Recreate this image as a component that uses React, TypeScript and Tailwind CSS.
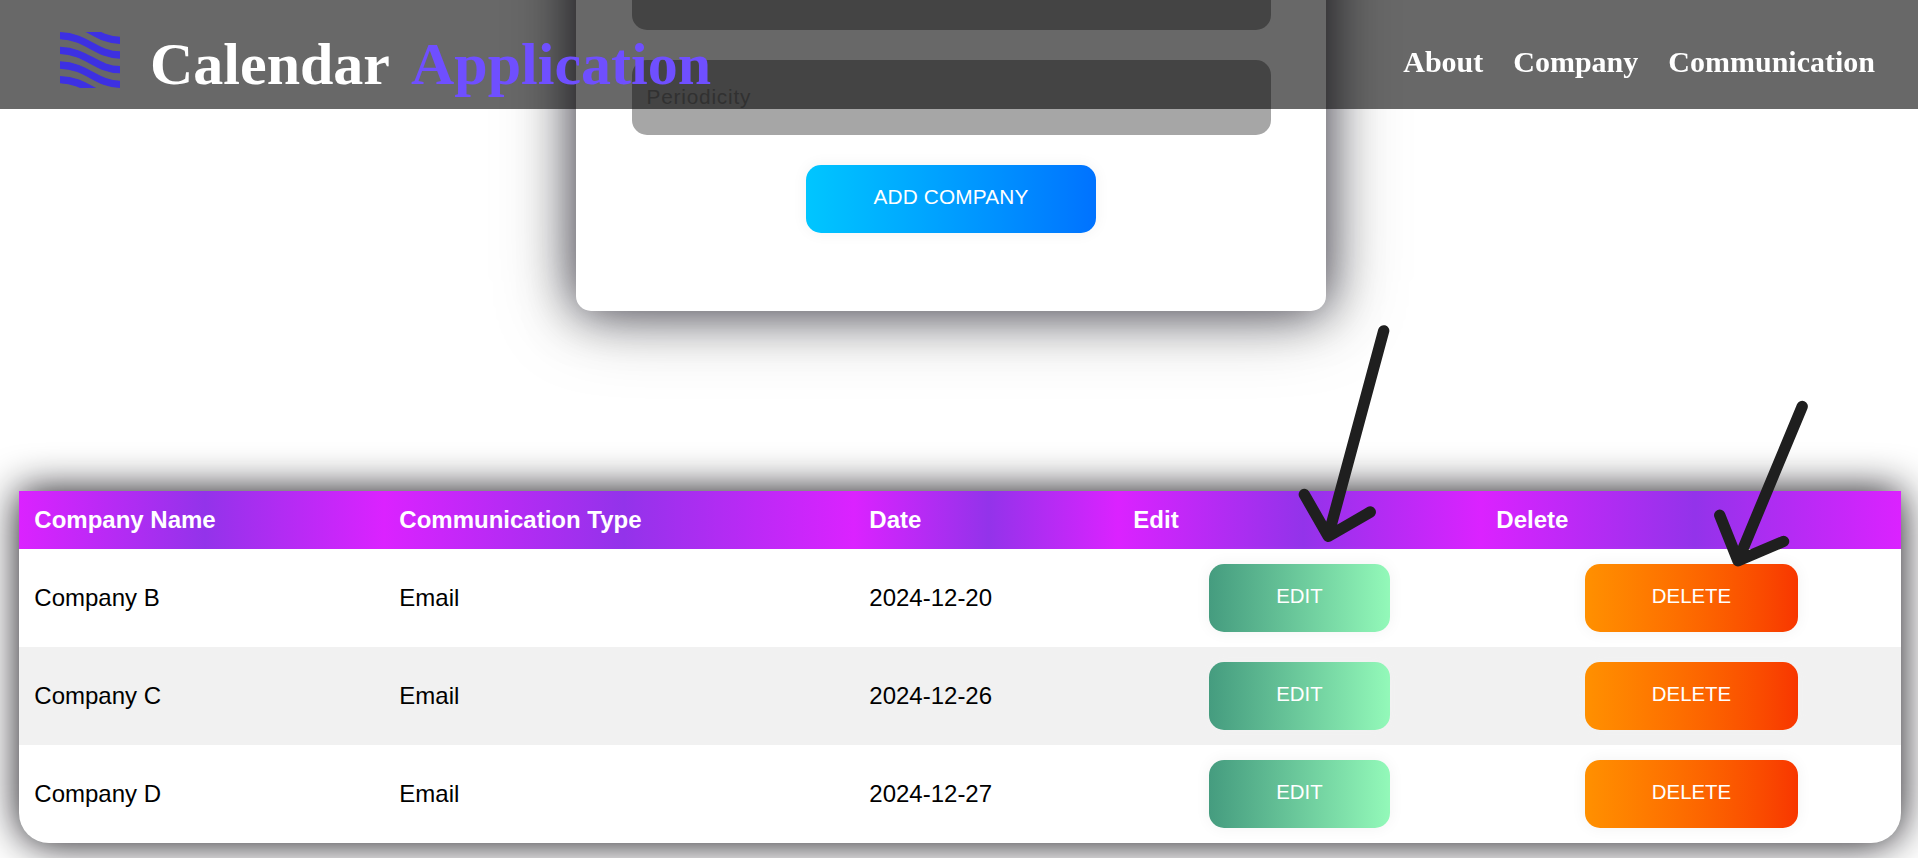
import React from "react";

type Row = { company: string; type: string; date: string };

const rows: Row[] = [
  { company: "Company B", type: "Email", date: "2024-12-20" },
  { company: "Company C", type: "Email", date: "2024-12-26" },
  { company: "Company D", type: "Email", date: "2024-12-27" },
];

const headings = ["Company Name", "Communication Type", "Date", "Edit", "Delete"];
const links = ["About", "Company", "Communication"];

const buttonBase =
  "flex h-[68px] items-center justify-center rounded-[15px] pb-[4px] leading-[24px] uppercase text-white shadow-[0_0_16px_#f2f2f2]";

function Logo() {
  return (
    <svg width="60" height="56" viewBox="0 0 60 56" fill="none" stroke="#3d30e2" strokeWidth="7.3">
      {[-14.7, 0, 14.7, 29.3, 43.9].map((y) => (
        <path key={y} transform={`translate(0 ${y})`} d="M-4 3.7 H0 C27 4.5 36 22.8 60 23 H64" />
      ))}
    </svg>
  );
}

function Header() {
  return (
    <header className="fixed inset-x-0 top-0 z-10 flex h-[109px] items-start justify-between bg-[rgba(3,3,3,0.6)] pr-[43px] pl-[60px] font-['Liberation_Serif',serif] font-bold text-white">
      <div className="flex items-start pt-8">
        <Logo />
        <h1 className="ml-[30px] flex gap-[21px] text-[60px] leading-[64px]">
          <span>Calendar</span>
          <span className="text-[#6f4fff]">Application</span>
        </h1>
      </div>
      <nav className="flex gap-[30px] pt-[45px] text-[30px] leading-[34px]">
        {links.map((link) => (
          <a key={link} href="#">
            {link}
          </a>
        ))}
      </nav>
    </header>
  );
}

function CompanyForm() {
  return (
    <form className="relative -left-[8px] mx-auto -mt-[200px] flex h-[511px] w-[750px] shrink-0 flex-col items-center rounded-[15px] bg-white pt-[155px] shadow-[0_0_50px_rgba(5,3,15,0.65),0_0_80px_rgba(5,3,15,0.35)]">
      <div className="h-[75px] w-[639px] rounded-[15px] bg-[#a6a6a6]" />
      <div className="mt-[30px] flex h-[75px] w-[639px] items-center rounded-[15px] bg-[#a6a6a6] pb-[2px] pl-[15px] text-[20.8px] tracking-[0.8px] text-[#757575]">
        Periodicity
      </div>
      <button
        type="button"
        className={`${buttonBase} mt-[30px] w-[290px] bg-linear-to-r from-[#00c6ff] to-[#0072ff] text-[20.8px] tracking-[0.15px]`}
      >
        Add Company
      </button>
    </form>
  );
}

function CompanyTable() {
  return (
    <div className="relative left-px mx-auto mt-[180px] w-[1882px] rounded-b-[30px] bg-white shadow-[0_0_40px_rgba(5,3,10,0.95)]">
      <table className="w-full table-fixed border-collapse text-[24px] text-black">
        <colgroup>
          <col className="w-[365px]" />
          <col className="w-[470px]" />
          <col className="w-[264px]" />
          <col className="w-[363px]" />
          <col className="w-[420px]" />
        </colgroup>
        <thead>
          <tr className="h-[58px]">
            {headings.map((heading) => (
              <th
                key={heading}
                className="bg-[linear-gradient(to_right,#db22ff,#9333ea_51%,#db22ff)] p-0 pl-[15.3px] text-left font-bold text-white"
              >
                {heading}
              </th>
            ))}
          </tr>
        </thead>
        <tbody>
          {rows.map((row) => (
            <tr key={row.company} className="h-[98px] even:bg-[#f1f1f1]">
              <td className="p-0 pl-[15.3px]">{row.company}</td>
              <td className="p-0 pl-[15.3px]">{row.type}</td>
              <td className="p-0 pl-[15.3px]">{row.date}</td>
              <td className="p-0">
                <button
                  type="button"
                  className={`${buttonBase} mx-auto w-[181px] bg-linear-to-r from-[#459c7f] to-[#93f9b9] text-[20.4px]`}
                >
                  Edit
                </button>
              </td>
              <td className="p-0 pl-px">
                <button
                  type="button"
                  className={`${buttonBase} mx-auto w-[213px] bg-linear-to-r from-[#ff9000] to-[#f83600] text-[20.4px]`}
                >
                  Delete
                </button>
              </td>
            </tr>
          ))}
        </tbody>
      </table>
    </div>
  );
}

function Arrows() {
  return (
    <svg
      className="pointer-events-none absolute top-0 left-0"
      width="1918"
      height="858"
      viewBox="0 0 1918 858"
      fill="none"
      stroke="#1f1f1f"
      strokeWidth="11.3"
      strokeLinecap="round"
      strokeLinejoin="round"
    >
      <path d="M1383.7 330.8 L1328.2 536.3 M1304.3 494.5 L1328.2 536.3 L1370.3 512" />
      <path d="M1802.2 406.5 L1738 560.8 M1719.7 515.2 L1738 560.8 L1783.6 541.4" />
    </svg>
  );
}

export default function App() {
  return (
    <div className="relative flex h-[858px] w-[1918px] flex-col overflow-hidden bg-white font-['Liberation_Sans',Arial,sans-serif]">
      <Header />
      <CompanyForm />
      <CompanyTable />
      <Arrows />
    </div>
  );
}
